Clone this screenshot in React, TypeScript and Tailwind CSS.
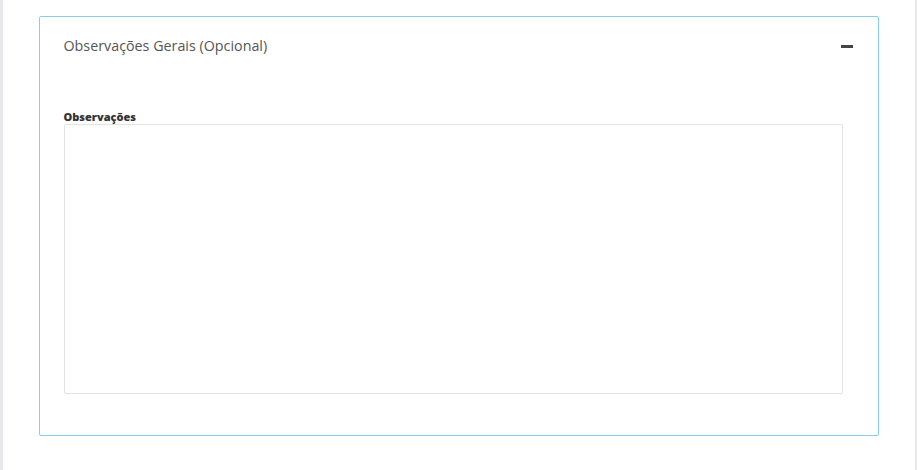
import React, { useState } from "react";

const App: React.FC = () => {
  const [open, setOpen] = useState(true);

  return (
    <div
      className="flex h-[470px] w-[917px] bg-white text-[#555]"
      style={{ fontFamily: '"Open Sans", "Liberation Sans", sans-serif' }}
    >
      <div className="w-[3px] bg-[#e8e8ea]" />
      <div className="flex-1 pl-[36px] pr-[36px] pt-4">
        <div className="h-[420px] w-[840px] rounded-[2px] border border-[#87cdeb]">
          <div className="flex items-center justify-between pl-[24px] pr-[23px] pt-[19px]">
            <span className="text-[14.3px] leading-5 text-[#555]">Observações Gerais (Opcional)</span>
            <button
              onClick={() => setOpen(!open)}
              className="flex h-5 w-4 items-center justify-center"
            >
              <span className="block h-[3px] w-[12px] bg-[#444]" />
            </button>
          </div>
          {open && (
            <div className="pl-[24px] pr-[35px] pt-[54px]">
              <label className="block text-[11px] font-extrabold leading-[13px] text-[#333]">
                Observações
              </label>
              <textarea className="mt-[1px] block h-[270px] w-[779px] resize-none rounded-[2px] border border-[#e3e3e3] outline-none" />
            </div>
          )}
        </div>
      </div>
      <div className="w-[3px] bg-[#e8e8ea]" />
    </div>
  );
};

export default App;
